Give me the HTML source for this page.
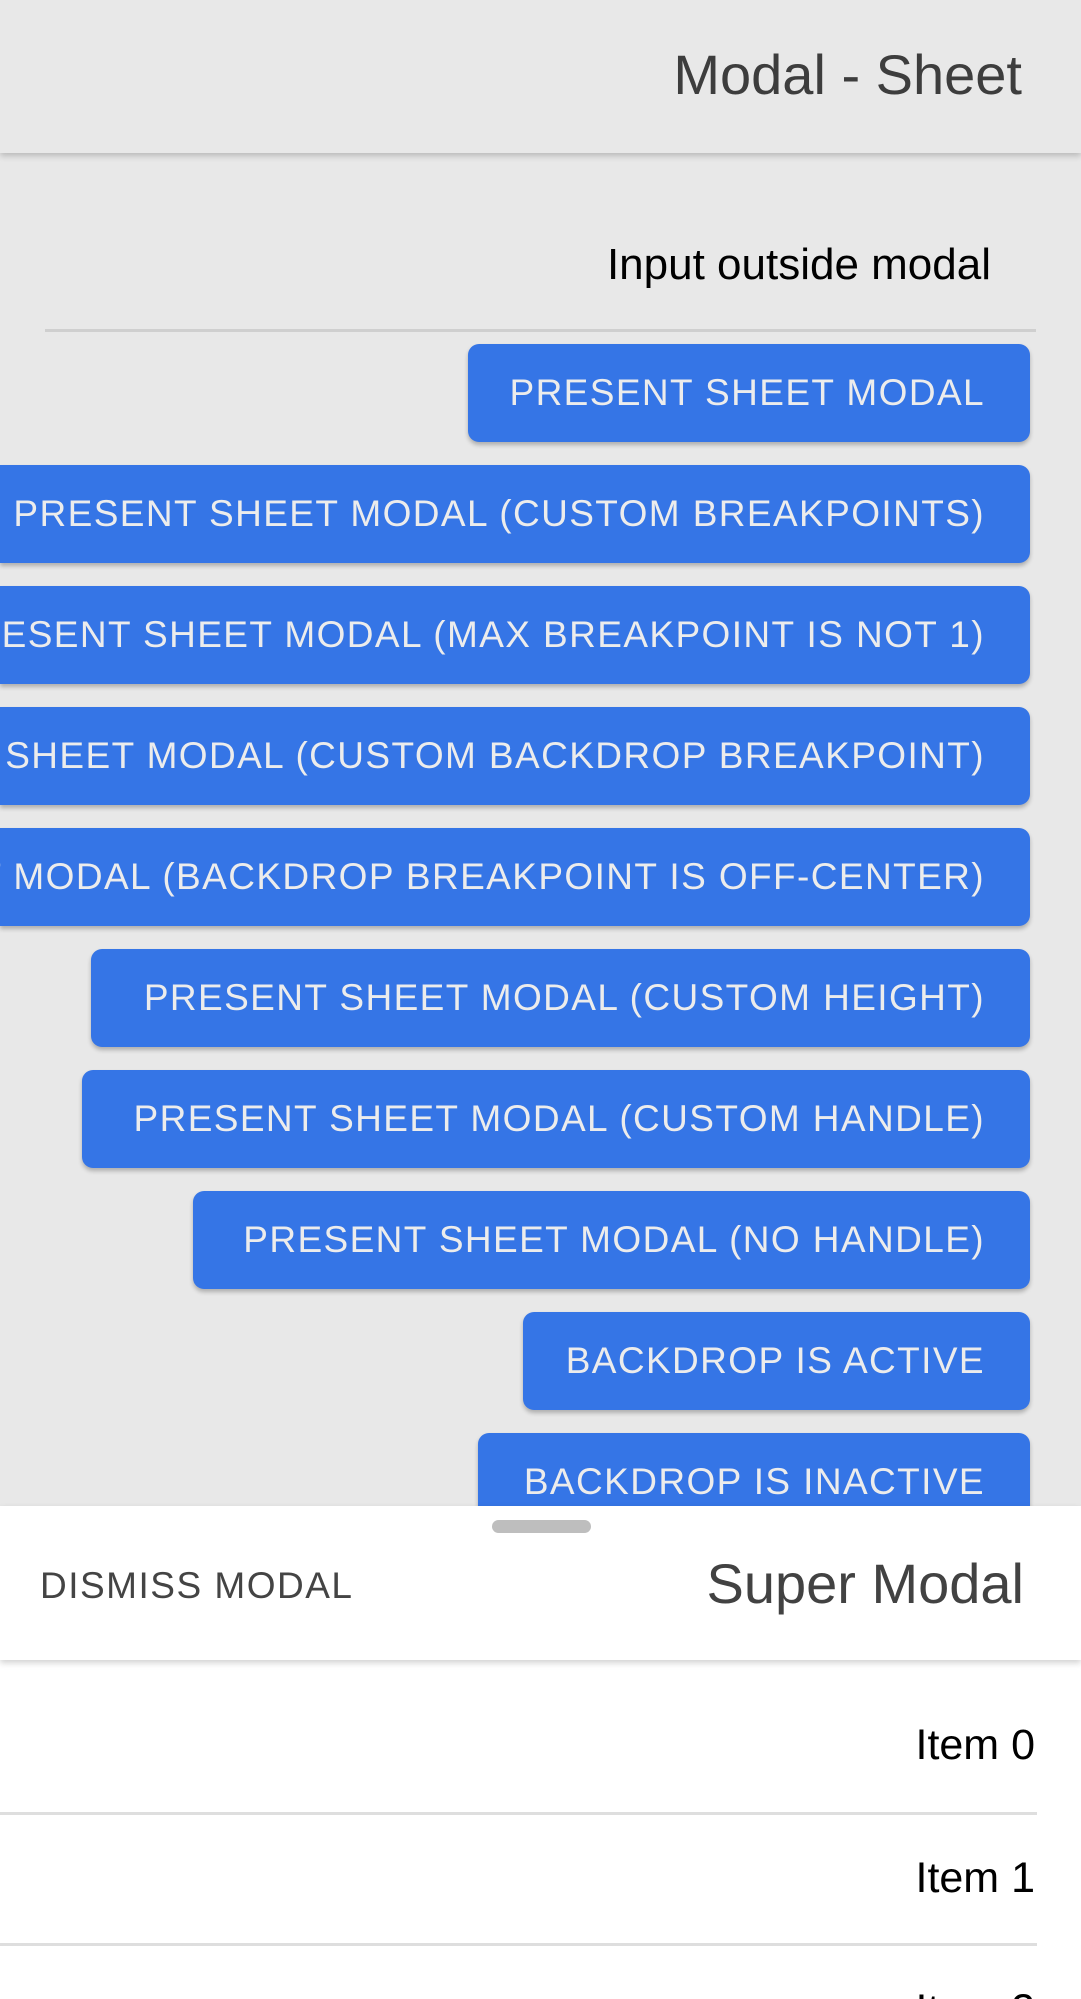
<!DOCTYPE html>
<html><head><meta charset="utf-8"><style>
html,body{margin:0;padding:0;overflow:hidden;width:1081px;height:1999px}
#w{width:1081px;height:1999px;position:relative;overflow:hidden;background:#e8e8e8;font-family:"Liberation Sans",Arial,sans-serif}
.hdr{position:absolute;left:0;top:0;width:1081px;height:153px;background:#e8e8e8;box-shadow:0 3px 6px rgba(0,0,0,0.2)}
.title{position:absolute;right:59px;top:40px;font-size:56px;line-height:70px;color:#3d3d3d;white-space:nowrap}
.inp{position:absolute;right:90px;top:237px;font-size:44px;line-height:56px;color:#000;white-space:nowrap}
.line{position:absolute;height:3px;background:#cfcfcf}
.btn{position:absolute;right:51px;height:98px;background:#3575e6;border-radius:11px;box-shadow:0 3px 4px rgba(0,0,0,0.25);color:#ececec;font-size:37px;letter-spacing:1.4px;line-height:98px;white-space:nowrap;overflow:hidden}
.btn.full{left:0;border-radius:0 11px 11px 0}
.btn span{position:absolute;right:45px;top:0}
.sheet{position:absolute;left:0;top:1506px;width:1081px;height:520px;background:#fff}
.handle{position:absolute;left:492px;top:14px;width:99px;height:13px;border-radius:7px;background:#bebebe}
.shdr{position:absolute;left:0;top:0;width:1081px;height:154px;background:#fff;box-shadow:0 3px 6px rgba(0,0,0,0.18)}
.dismiss{position:absolute;left:40px;top:55px;font-size:37px;line-height:50px;color:#444;letter-spacing:1.5px;white-space:nowrap}
.stitle{position:absolute;right:57px;top:43px;font-size:56px;line-height:70px;color:#424242;white-space:nowrap}
.item{position:absolute;right:46px;font-size:43px;line-height:56px;color:#000;white-space:nowrap}
</style></head><body><div id="w">
<div class="hdr"><div class="title">Modal - Sheet</div></div>
<div class="inp">Input outside modal</div>
<div class="line" style="left:45px;width:991px;top:329px"></div>

<div class="btn" style="top:344px;left:468px"><span>PRESENT SHEET MODAL</span></div>
<div class="btn full" style="top:465px"><span>PRESENT SHEET MODAL (CUSTOM BREAKPOINTS)</span></div>
<div class="btn full" style="top:586px"><span>PRESENT SHEET MODAL (MAX BREAKPOINT IS NOT 1)</span></div>
<div class="btn full" style="top:707px"><span>PRESENT SHEET MODAL (CUSTOM BACKDROP BREAKPOINT)</span></div>
<div class="btn full" style="top:828px"><span>PRESENT SHEET MODAL (BACKDROP BREAKPOINT IS OFF-CENTER)</span></div>
<div class="btn" style="top:949px;left:91px"><span>PRESENT SHEET MODAL (CUSTOM HEIGHT)</span></div>
<div class="btn" style="top:1070px;left:82px"><span>PRESENT SHEET MODAL (CUSTOM HANDLE)</span></div>
<div class="btn" style="top:1191px;left:193px"><span>PRESENT SHEET MODAL (NO HANDLE)</span></div>
<div class="btn" style="top:1312px;left:523px"><span>BACKDROP IS ACTIVE</span></div>
<div class="btn" style="top:1433px;left:478px"><span>BACKDROP IS INACTIVE</span></div>

<div class="sheet">
  <div class="shdr">
    <div class="handle"></div>
    <div class="dismiss">DISMISS MODAL</div>
    <div class="stitle">Super Modal</div>
  </div>
  <div class="item" style="top:211px">Item 0</div>
  <div class="line" style="left:0;width:1037px;top:306px;background:#dedede"></div>
  <div class="item" style="top:344px">Item 1</div>
  <div class="line" style="left:0;width:1037px;top:437px;background:#dedede"></div>
  <div class="item" style="top:476px">Item 2</div>
</div>
</div></body></html>
